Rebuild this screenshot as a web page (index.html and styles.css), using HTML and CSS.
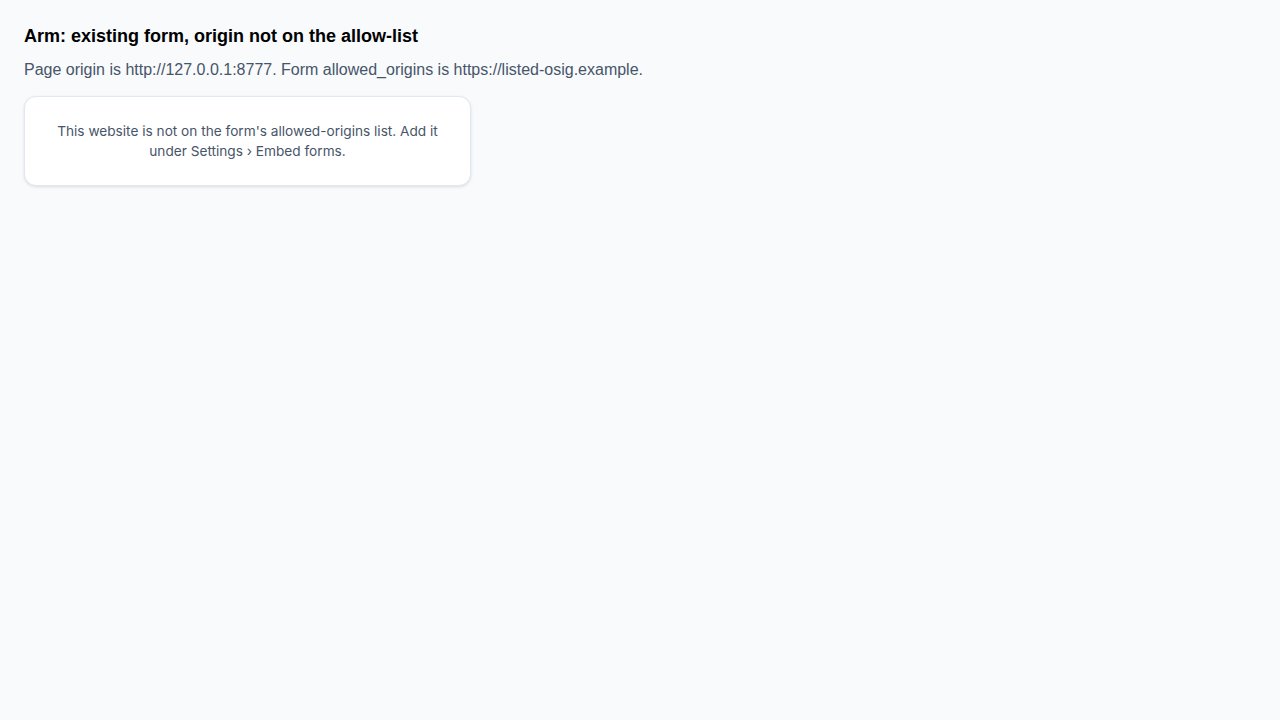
FILE: index.html
```html
<!DOCTYPE html>
<html lang="en">
<head>
<meta charset="utf-8">
<title>Embed form test</title>
<link rel="stylesheet" href="styles.css">
</head>
<body>
<main class="page">
  <h1 class="title">Arm: existing form, origin not on the allow-list</h1>
  <p class="desc">Page origin is http://127.0.0.1:8777. Form allowed_origins is https://listed-osig.example.</p>
  <div class="card">
    <p class="card-msg">This website is not on the form's allowed-origins list. Add it under Settings › Embed forms.</p>
  </div>
</main>
</body>
</html>
```
FILE: styles.css
```css
html, body {
  margin: 0;
  background: #f8fafc;
}
.page {
  padding: 24px;
  font-family: "Liberation Sans", Arial, sans-serif;
}
.title {
  margin: 0;
  font-size: 18px;
  line-height: 24px;
  font-weight: 700;
  color: #000;
}
.desc {
  margin: 10px 0 14px;
  font-size: 16px;
  line-height: 24px;
  color: #475569;
}
.card {
  box-sizing: border-box;
  width: 447px;
  padding: 24px;
  background: #fff;
  border: 1px solid #e2e8f0;
  border-radius: 12px;
  box-shadow: 0 1px 3px rgba(15, 23, 42, 0.12);
}
.card-msg {
  margin: 0;
  font-family: Inter, "Liberation Sans", sans-serif;
  font-size: 13.65px;
  line-height: 20px;
  color: #475569;
  text-align: center;
}
```
